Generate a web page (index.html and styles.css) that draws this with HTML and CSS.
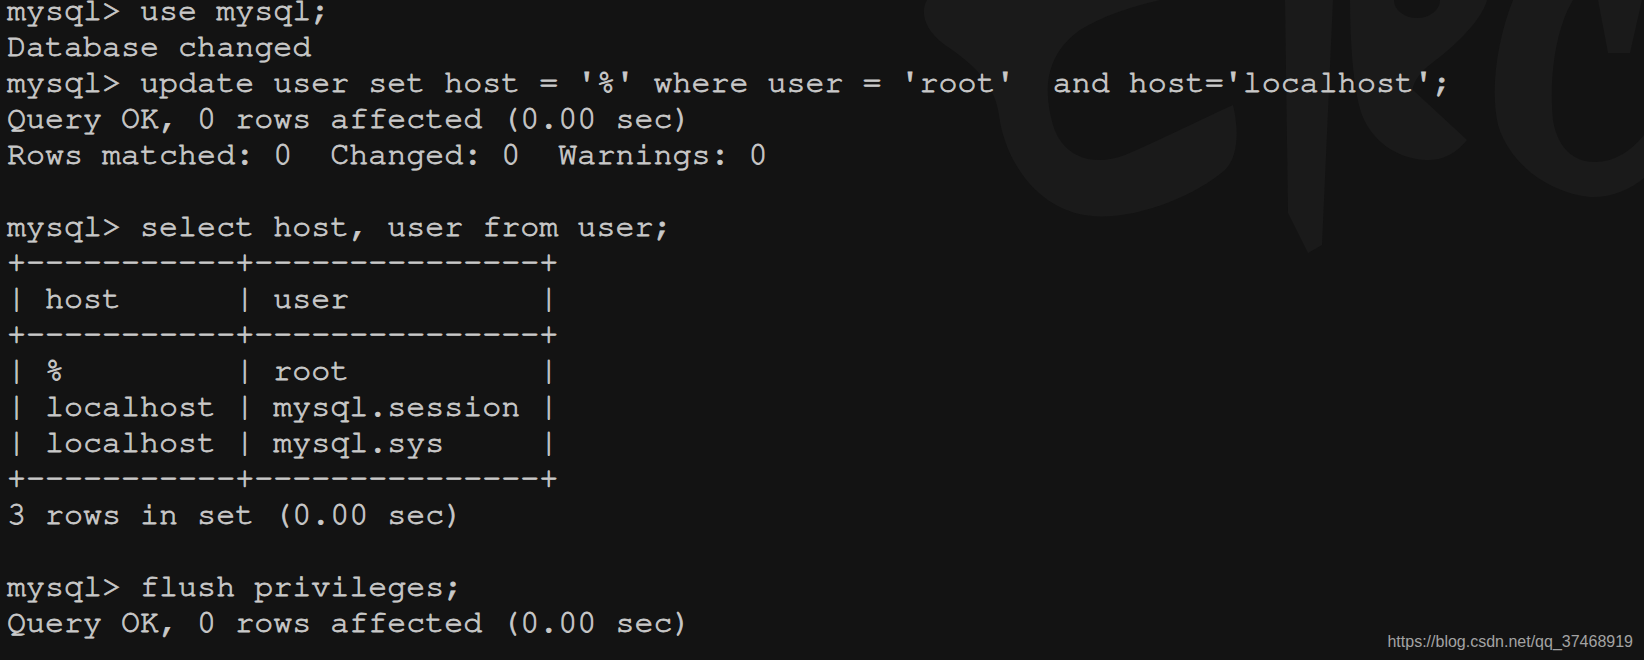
FILE: index.html
```html
<!DOCTYPE html>
<html lang="en">
<head>
<meta charset="utf-8">
<title>mysql terminal</title>
<link rel="stylesheet" href="styles.css">
</head>
<body>
<main class="terminal">
<svg class="watermark" width="1644" height="660" viewBox="0 0 1644 660" aria-hidden="true">
<path d="M927,0 C921,10 922,28 945,45 C975,65 995,85 999,115 C1004,155 1030,200 1075,213 C1120,226 1190,200 1225,170 C1240,155 1238,125 1233,105 C1200,120 1160,140 1125,155 C1090,168 1062,155 1053,125 C1043,90 1045,55 1080,30 C1110,12 1140,5 1160,0 Z"/>
<path d="M1285,0 L1288,213 L1308,253 L1322,245 L1333,0 Z"/>
<path fill-rule="evenodd" d="M1350,0 L1487,0 C1484,12 1470,35 1427,67 C1418,75 1412,85 1413,90 L1467,140 C1455,155 1440,161 1425,160 C1395,158 1372,140 1362,115 C1353,90 1350,40 1350,0 Z M1394,0 A23,18 0 0 0 1440,0 Z"/>
<path d="M1513,0 L1573,0 C1555,30 1549,80 1553,120 C1558,150 1575,162 1595,162 C1615,162 1632,150 1644,135 L1644,178 C1630,190 1610,198 1590,197 C1550,193 1510,165 1498,125 C1490,90 1497,40 1513,0 Z"/>
<path d="M1598,0 L1608,53 L1630,53 L1642,0 Z"/>
</svg>
<div class="output">
<div class="line">mysql&gt; use mysql;</div>
<div class="line">Database changed</div>
<div class="line">mysql&gt; update user set host = '%' where user = 'root'  and host='localhost';</div>
<div class="line">Query OK, 0 rows affected (0.00 sec)</div>
<div class="line">Rows matched: 0  Changed: 0  Warnings: 0</div>
<div class="line"> </div>
<div class="line">mysql&gt; select host, user from user;</div>
<div class="line">+-----------+---------------+</div>
<div class="line">| host      | user          |</div>
<div class="line">+-----------+---------------+</div>
<div class="line">| %         | root          |</div>
<div class="line">| localhost | mysql.session |</div>
<div class="line">| localhost | mysql.sys     |</div>
<div class="line">+-----------+---------------+</div>
<div class="line">3 rows in set (0.00 sec)</div>
<div class="line"> </div>
<div class="line">mysql&gt; flush privileges;</div>
<div class="line">Query OK, 0 rows affected (0.00 sec)</div>
</div>
<span class="credit">https://blog.csdn.net/qq_37468919</span>
</main>
</body>
</html>
```

FILE: styles.css
```css
html, body {
  margin: 0;
  padding: 0;
  background: #131313;
}

.terminal {
  position: relative;
  width: 1644px;
  height: 660px;
  overflow: hidden;
  background: #131313;
}

.watermark {
  position: absolute;
  left: 0;
  top: 0;
  fill: #1a1a1a;
  z-index: 0;
}

.output {
  position: relative;
  z-index: 1;
  display: flex;
  flex-direction: column;
  align-items: flex-start;
  margin: -7px 0 0 0;
  padding: 0 0 0 7px;
  font-family: "Nimbus Mono PS", "Nimbus Mono L", "FreeMono", "Courier 10 Pitch", "Liberation Mono", monospace;
  font-size: 31.7px;
  line-height: 36px;
  color: #c9c9c9;
  -webkit-text-stroke: 0.8px #c9c9c9;
}

.line {
  white-space: pre;
  height: 36px;
}

.credit {
  position: absolute;
  right: 11px;
  bottom: 9px;
  z-index: 1;
  font-family: "Liberation Sans", Arial, sans-serif;
  font-size: 16px;
  color: #a3a3a3;
}
```
